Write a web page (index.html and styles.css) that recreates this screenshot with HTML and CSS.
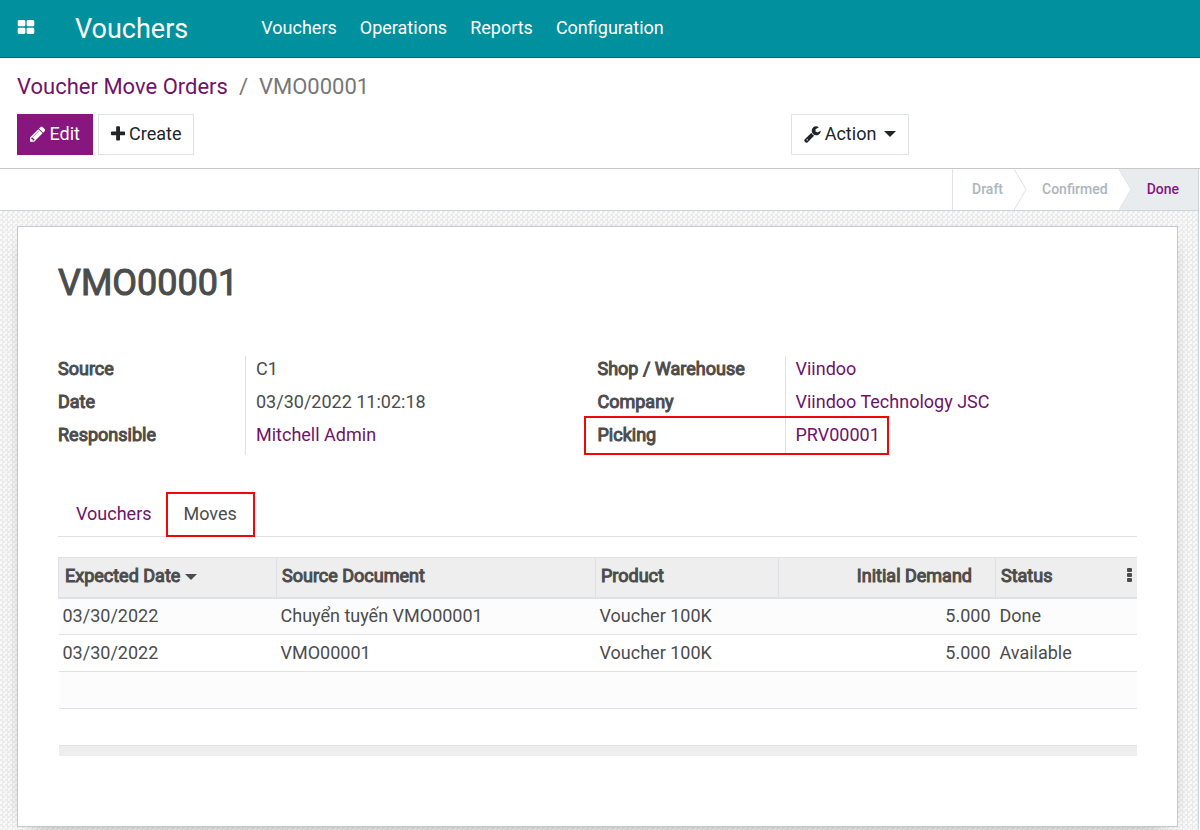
FILE: index.html
```html
<!DOCTYPE html>
<html lang="en">
<head>
    <meta charset="UTF-8">
    <meta name="viewport" content="width=device-width, initial-scale=1.0">
    <title>VMO00001 - Vouchers</title>
    <link rel="stylesheet" href="styles.css">
</head>
<body>
    <header class="navbar">
        <button class="apps-button" aria-label="Applications">
            <svg class="icon-apps" viewBox="64 128 1664 1408"><path d="M832 1024v384q0 52-38 90t-90 38h-512q-52 0-90-38t-38-90v-384q0-52 38-90t90-38h512q52 0 90 38t38 90zm0-768v384q0 52-38 90t-90 38h-512q-52 0-90-38t-38-90v-384q0-52 38-90t90-38h512q52 0 90 38t38 90zm896 768v384q0 52-38 90t-90 38h-512q-52 0-90-38t-38-90v-384q0-52 38-90t90-38h512q52 0 90 38t38 90zm0-768v384q0 52-38 90t-90 38h-512q-52 0-90-38t-38-90v-384q0-52 38-90t90-38h512q52 0 90 38t38 90z"/></svg>
        </button>
        <a href="#" class="brand">Vouchers</a>
        <nav class="menu">
            <a href="#">Vouchers</a>
            <a href="#">Operations</a>
            <a href="#">Reports</a>
            <a href="#">Configuration</a>
        </nav>
    </header>

    <div class="control-panel">
        <div class="breadcrumb">
            <a href="#">Voucher Move Orders</a>
            <span class="separator">/</span>
            <span>VMO00001</span>
        </div>
        <div class="toolbar">
            <div class="toolbar-left">
                <button class="btn btn-primary"><svg class="icon" viewBox="128 0 1536 1792"><path d="M491 1536l91-91-235-235-91 91v107h128v128h107zm523-928q0-22-22-22-10 0-17 7l-542 542q-7 7-7 17 0 22 22 22 10 0 17-7l542-542q7-7 7-17zm-54-192l416 416-832 832h-416v-416zm683 96q0 53-37 90l-166 166-416-416 166-165q36-38 90-38 53 0 91 38l235 234q37 39 37 91z"/></svg>Edit</button>
                <button class="btn"><svg class="icon" viewBox="192 0 1408 1792"><path d="M1600 736v192q0 40-28 68t-68 28h-416v416q0 40-28 68t-68 28h-192q-40 0-68-28t-28-68v-416h-416q-40 0-68-28t-28-68v-192q0-40 28-68t68-28h416v-416q0-40 28-68t68-28h192q40 0 68 28t28 68v416h416q40 0 68 28t28 68z"/></svg>Create</button>
            </div>
            <button class="btn"><svg class="icon" viewBox="64 0 1664 1792"><path d="M448 1472q0-26-19-45t-45-19-45 19-19 45 19 45 45 19 45-19 19-45zm644-420l-682 682q-37 37-90 37-52 0-91-37l-106-108q-38-36-38-90 0-53 38-91l681-681q39 98 114.5 173.5t173.5 114.5zm634-435q0 39-23 106-47 134-164.5 217.5t-258.5 83.5q-185 0-316.5-131.5t-131.5-316.5 131.5-316.5 316.5-131.5q58 0 121.5 16.5t107.5 46.5q16 11 16 28t-16 28l-293 169v224l193 107q5-3 79-48.5t135.5-81 70.5-35.5q15 0 23.5 10t8.5 25z"/></svg>Action<span class="caret"></span></button>
        </div>
    </div>

    <main class="form-view">
        <div class="statusbar">
            <span class="status">Draft</span>
            <svg class="arrow" viewBox="0 0 13 41" preserveAspectRatio="none"><path d="M0 0L12 20.500L0 41" fill="#fff" stroke="#dee2e6"/></svg>
            <span class="status">Confirmed</span>
            <svg class="arrow arrow-current" viewBox="0 0 13 41" preserveAspectRatio="none"><path d="M0 0L12 20.500L0 41" fill="#fff" stroke="#dee2e6"/></svg>
            <span class="status status-current">Done</span>
        </div>

        <div class="sheet-bg">
            <div class="sheet">
                <h1>VMO00001</h1>

                <div class="groups">
                    <dl class="group">
                        <div class="field"><dt>Source</dt><dd>C1</dd></div>
                        <div class="field"><dt>Date</dt><dd>03/30/2022 11:02:18</dd></div>
                        <div class="field"><dt>Responsible</dt><dd><a href="#">Mitchell Admin</a></dd></div>
                    </dl>
                    <dl class="group">
                        <div class="field"><dt>Shop / Warehouse</dt><dd><a href="#">Viindoo</a></dd></div>
                        <div class="field"><dt>Company</dt><dd><a href="#">Viindoo Technology JSC</a></dd></div>
                        <div class="field field-marked"><dt>Picking</dt><dd><a href="#">PRV00001</a></dd></div>
                    </dl>
                </div>

                <div class="tabs" role="tablist">
                    <button class="tab" role="tab">Vouchers</button>
                    <button class="tab tab-active" role="tab" aria-selected="true">Moves</button>
                </div>

                <table class="moves">
                    <thead>
                        <tr>
                            <th class="col-date">Expected Date<span class="caret"></span></th>
                            <th class="col-source">Source Document</th>
                            <th class="col-product">Product</th>
                            <th class="col-demand">Initial Demand</th>
                            <th>
                                <div class="status-head">Status
                                    <button class="dots" aria-label="Optional columns"><svg viewBox="0 0 5 14"><rect width="5" height="4" rx="1"/><rect y="5" width="5" height="4" rx="1"/><rect y="10" width="5" height="4" rx="1"/></svg></button>
                                </div>
                            </th>
                        </tr>
                    </thead>
                    <tbody>
                        <tr><td>03/30/2022</td><td>Chuyển tuyến VMO00001</td><td>Voucher 100K</td><td class="number">5.000</td><td>Done</td></tr>
                        <tr><td>03/30/2022</td><td>VMO00001</td><td>Voucher 100K</td><td class="number">5.000</td><td>Available</td></tr>
                        <tr><td colspan="5"></td></tr>
                        <tr><td colspan="5"></td></tr>
                    </tbody>
                    <tfoot>
                        <tr><td colspan="5"></td></tr>
                    </tfoot>
                </table>
            </div>
        </div>
    </main>
</body>
</html>
```
FILE: styles.css
```css
* {
    box-sizing: border-box;
}
body {
    margin: 0;
    min-height: 100vh;
    display: flex;
    flex-direction: column;
    background-color: white;
    color: #4c4c4c;
    font-family: Roboto, "Noto Sans", sans-serif;
    font-size: 18px;
    line-height: 27px;
}
a {
    color: #71126b;
    text-decoration: none;
}
button {
    font: inherit;
    color: inherit;
    background: none;
    border: none;
    padding: 0;
    cursor: pointer;
}
svg {
    display: block;
    fill: currentColor;
}

/* top bar */
.navbar {
    display: flex;
    align-items: center;
    height: 58px;
    padding: 0 17px 2px;
    background-color: #00909e;
    border-bottom: 1px solid #006d78;
    color: white;
}
.navbar a {
    color: white;
}
.apps-button {
    padding-bottom: 2px;
}
.icon-apps {
    width: 18px;
    height: 14px;
}
.brand {
    margin-left: 40px;
    padding-top: 3px;
    font-size: 27px;
}
.menu {
    display: flex;
    gap: 23px;
    margin-left: 73px;
}

/* breadcrumb and buttons */
.control-panel {
    padding: 12px 22px 13px 17px;
    border-bottom: 1px solid #c8c8cc;
}
.breadcrumb {
    display: flex;
    gap: 11px;
    font-size: 22px;
    line-height: 34px;
    color: #777;
}
.toolbar {
    display: grid;
    grid-template-columns: 2fr 1fr;
    justify-items: start;
    margin-top: 10px;
}
.toolbar-left {
    display: flex;
    gap: 5px;
}
.btn {
    display: flex;
    align-items: center;
    height: 41px;
    padding: 0 12px 2px;
    border: 1px solid #dee2e6;
    background-color: white;
    color: #212529;
}
.btn-primary {
    background-color: #87167f;
    border-color: #87167f;
    color: white;
}
.icon {
    height: 18px;
    margin-right: 4px;
}
.caret {
    display: inline-block;
    margin-left: 8px;
    border: 6px solid transparent;
    border-top-color: currentColor;
    border-bottom: none;
    vertical-align: middle;
}

/* status steps */
.form-view {
    flex: 1;
    display: flex;
    flex-direction: column;
    margin-right: 1px;
    border-right: 1px solid #ced4da;
}
.statusbar {
    display: flex;
    justify-content: flex-end;
    height: 42px;
    border-bottom: 1px solid #ced4da;
    font-size: 14px;
    font-weight: 500;
    line-height: 40px;
    color: #adb5bd;
}
.status {
    padding: 0 11px 0 15px;
}
.status:first-child {
    padding-left: 19px;
    border-left: 1px solid #dee2e6;
}
.arrow {
    width: 13px;
    height: 41px;
}
.arrow-current {
    background-color: #e9ecef;
}
.status-current {
    padding-right: 19px;
    background-color: #e9ecef;
    color: #87167f;
}

/* sheet */
.sheet-bg {
    flex: 1;
    padding: 15px 20px 3px 17px;
    background: repeating-conic-gradient(#ebebeb 0% 25%, #f9f9f9 0% 50%) 0 0 / 5px 5px;
}
.sheet {
    height: 100%;
    padding: 33px 40px 70px;
    background-color: white;
    border: 1px solid #c8c8d3;
    box-shadow: 0 5px 20px -15px black;
}
h1, dt, th {
    font-weight: 400;
    -webkit-text-stroke: 1px;
}
h1 {
    margin: 0;
    font-size: 36px;
    line-height: 46px;
}
.groups {
    display: grid;
    grid-template-columns: 1fr 1fr;
    margin-top: 50px;
}
.group {
    margin: 0;
}
.field {
    position: relative;
    display: flex;
    line-height: 26px;
}
.field dt {
    width: 187px;
    padding-bottom: 7px;
}
.field dd {
    margin: 0;
    padding: 0 10px 7px;
    border-left: 1px solid #dee2e6;
}
.field-marked::after {
    content: "";
    position: absolute;
    top: -6px;
    left: -14px;
    box-sizing: border-box;
    width: 305px;
    height: 39px;
    border: 2px solid #f00808;
}

/* tabs */
.tabs {
    display: flex;
    margin-top: 37px;
    border-bottom: 1px solid #dee2e6;
}
.tab {
    height: 44px;
    padding: 0 14px 1px 18px;
    color: #71126b;
}
.tab-active {
    margin-bottom: -1px;
    height: 45px;
    padding: 0 16px 2px;
    border: 2px solid #f00808;
    color: #4c4c4c;
}

/* moves list */
.moves {
    width: 100%;
    margin-top: 20px;
    border-collapse: collapse;
    table-layout: fixed;
}
.moves th {
    height: 40px;
    padding: 0 5px 4px;
    background-color: #eee;
    border-top: 1px solid #dee2e6;
    border-bottom: 2px solid #dee2e6;
    border-left: 1px solid #dee2e6;
    text-align: left;
}
.moves .col-date {
    width: 218px;
    padding-left: 6px;
}
.moves .col-source {
    width: 319px;
}
.moves .col-product {
    width: 183px;
}
.moves .col-demand {
    width: 217px;
    padding-right: 23px;
    text-align: right;
}
.moves .caret {
    margin-left: 5px;
}
.status-head {
    display: flex;
    justify-content: space-between;
    align-items: center;
}
.dots svg {
    width: 5px;
    height: 14px;
}
.moves td {
    height: 37px;
    padding: 0 5px 2px 4px;
    border-bottom: 1px solid #dee2e6;
}
.moves tbody tr:nth-child(odd) {
    background-color: #fcfcfc;
}
.number {
    text-align: right;
}
.moves tfoot td {
    height: 10px;
    background-color: #eee;
    border-bottom: none;
}
```
